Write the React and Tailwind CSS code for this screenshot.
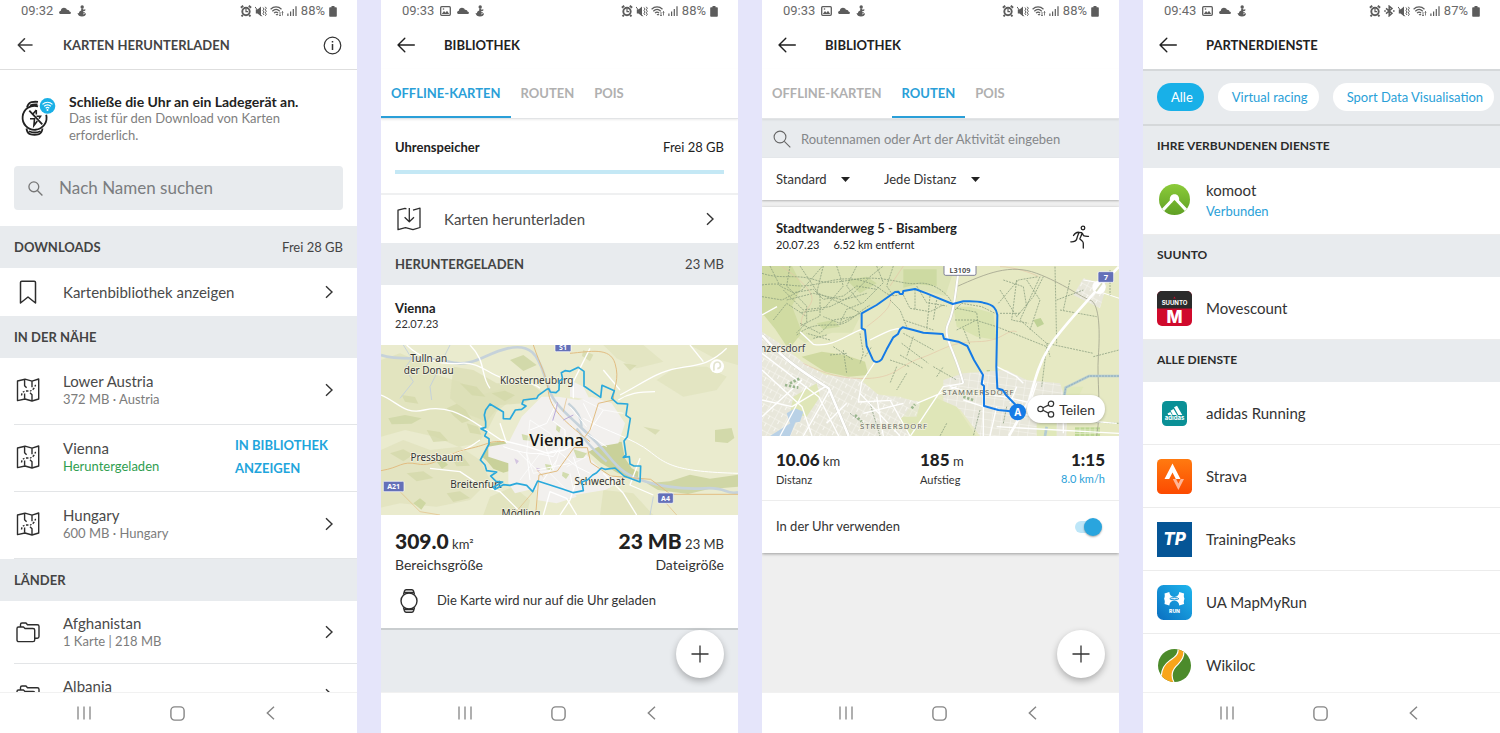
import { useState } from "react";

/* ---------- Icons ---------- */

function BackArrow({ bold }) {
  return bold ? (
    <svg width="16" height="16" viewBox="0 0 16 16" fill="none" stroke="#3c3c3c" strokeWidth="1.6" strokeLinecap="round" strokeLinejoin="round">
      <path d="M15 8H1.5M7.5 1.8 1.3 8l6.2 6.2" />
    </svg>
  ) : (
    <svg width="18" height="16" viewBox="0 0 18 16" fill="none" stroke="#1f1f1f" strokeWidth="1.4" strokeLinecap="round" strokeLinejoin="round">
      <path d="M17.3 8H1M7.8 1.2 1 8l6.8 6.8" />
    </svg>
  );
}

function Chevron() {
  return (
    <svg width="8" height="14" viewBox="0 0 8 14" fill="none" stroke="#333" strokeWidth="1.4" className="shrink-0">
      <path d="m1 1.2 6 5.8-6 5.8" />
    </svg>
  );
}

function MapIcon() {
  return (
    <svg width="24" height="24" viewBox="0 0 24 24" fill="none" stroke="#2d2d2d" strokeWidth="1.4" strokeLinejoin="round">
      <path d="M1.5 3 9 1.2l7 2L22.7 1v20L16 23l-7-2-7.5 1.6z" />
      <path d="M8.6 1.5v6.3l2 2M16 3.3v6M8.6 20.8v-5.2M16 22.6v-5.8l-2-2" />
      <path d="M5.5 17.5c.5-3.2 2-4.5 5.5-4.5s4.5.2 6.5-2.2 1.5-3.5 2.5-4.3" strokeDasharray="2 1.5" />
    </svg>
  );
}

function MapDownloadIcon() {
  return (
    <svg width="24" height="24" viewBox="0 0 24 24" fill="none" stroke="#2d2d2d" strokeWidth="1.3" strokeLinejoin="round">
      <path d="M9.5 2 8 1.3 1 3.2v19.5l7.5-2 7.5 2 7-2.2V1.2l-7 2" />
      <path d="M12.3 1v13.5M7.6 10.2l4.7 4.5 4.7-4.5" />
    </svg>
  );
}

function BookmarkIcon() {
  return (
    <svg width="18" height="24" viewBox="0 0 18 24" fill="none" stroke="#2d2d2d" strokeWidth="1.5" strokeLinejoin="round">
      <path d="M1.5 23V2.5c0-.8.5-1.3 1.3-1.3h12.4c.8 0 1.3.5 1.3 1.3V23L9 17z" />
    </svg>
  );
}

function FoldersIcon() {
  return (
    <svg width="24" height="24" viewBox="0 0 24 24" fill="none" stroke="#2d2d2d" strokeWidth="1.4" strokeLinejoin="round">
      <path d="M1 20V8.5C1 7.5 1.6 7 2.5 7h5L9 8.500h8c1 0 1.7.6 1.7 1.6V20c0 1-.7 1.6-1.7 1.6H2.7C1.7 21.6 1 21 1 20z" />
      <path d="M4.5 7V4.5C4.5 3.6 5 3 6 3h4l1.5 1.8h9.8c1 0 1.7.6 1.7 1.5v10.2c0 1-.6 1.7-1.7 1.7h-2.5" />
    </svg>
  );
}

function WatchIcon() {
  return (
    <svg width="20" height="24" viewBox="0 0 20 24" fill="none" stroke="#2d2d2d" strokeWidth="1.4">
      <circle cx="10" cy="12" r="8" />
      <path d="M4.5 5.5 5.5 2c.3-.8.8-1.2 1.6-1.2h5.8c.8 0 1.3.4 1.6 1.2l1 3.5M4.5 18.5l1 3.5c.3.8.8 1.2 1.6 1.2h5.8c.8 0 1.3-.4 1.6-1.2l1-3.5M5.5 3.5h9M5.5 20.5h9" />
    </svg>
  );
}

function ChargeWatchIcon() {
  return (
    <svg width="36" height="40" viewBox="0 0 36 40" fill="none" stroke="#222" strokeWidth="1.8">
      <path d="M6 9.5c.8-3 1.8-4.5 4.5-5.3 2-.5 4.5-.5 6.5-.3M9 7.6c2-1 4.8-1.4 7.5-1.2" />
      <path d="M17 8.3a12 12 0 1 0 8.2 8.5" />
      <path d="M5.5 30.5c.5 3.5 1.5 5 3.5 5.6 2.6.8 6.5.8 9 0 2-.6 3-2 3.5-5.6M8 33.2c3.5 1.6 8 1.6 11.5 0" />
      <path d="m8.3 12.7 13 13.6" />
      <path d="M15.3 12v4.5M15.3 12l-3.8 4.6M15.5 18.3h4l-1.5 2.4M9 20.8h4.5l-.6 6.7 3.4-4.5" strokeWidth="1.6" />
      <circle cx="26.5" cy="7.9" r="7.8" fill="#1ab0e6" stroke="none" />
      <g stroke="#fff" strokeWidth="1.2">
        <path d="M21.5 6.4c3-2.7 7-2.7 10 0M23.1 8.3c2-1.8 4.8-1.8 6.8 0M24.7 10.2c1.1-1 2.5-1 3.6 0" />
      </g>
      <circle cx="26.5" cy="11.9" r="1" fill="#fff" stroke="none" />
    </svg>
  );
}

function SearchIcon({ size, width, color }) {
  return (
    <svg width={size} height={size} viewBox="0 0 18 18" fill="none" stroke={color} strokeWidth={width} className="shrink-0">
      <circle cx="7" cy="7" r="5.9" />
      <path d="m11.3 11.3 6 6" />
    </svg>
  );
}

function RunnerIcon() {
  return (
    <svg width="20" height="24" viewBox="0 0 20 24" fill="none" stroke="#222" strokeWidth="1.3" strokeLinecap="round" strokeLinejoin="round">
      <circle cx="13" cy="3" r="1.8" />
      <path d="M3.5 10.5C5 8 6.5 7 9 7.3l2.5.3M11.5 7.6c1.2.7 1.5 1.5 2 3 1.5.7 3 .8 5 .7M9 7.5C8 10 7 12 6.8 14c-.8 2-2.5 3-6 2.8M11.8 9c-.5 2-1.6 3.3-2 5 2.2 1.5 3.5 2.5 3.5 4.5v4.5" />
    </svg>
  );
}

function ShareIcon() {
  return (
    <svg width="18" height="18" viewBox="0 0 18 18" fill="none" stroke="#333" strokeWidth="1.2">
      <circle cx="3.5" cy="9" r="2.7" />
      <circle cx="14" cy="3.8" r="2.7" />
      <circle cx="14" cy="14.4" r="2.7" />
      <path d="m6 7.8 5.5-2.7M6 10.2l5.5 2.9" />
    </svg>
  );
}

function Caret() {
  return (
    <svg width="9" height="5" viewBox="0 0 9 5" fill="#222" className="pointer-events-none">
      <path d="M0 0h9L4.5 5z" />
    </svg>
  );
}

/* ---------- Phone chrome ---------- */

function StatusBar({ time, battery, image = true, bluetooth }) {
  return (
    <div className="flex h-[22px] shrink-0 items-center justify-between pl-[21px] pr-5 font-[Roboto,sans-serif] text-[13px] leading-4 text-[#6a6a6a]">
      <div className="flex items-center gap-1.5">
        <span>{time}</span>
        {image && (
          <svg width="11" height="10" viewBox="0 0 11 10" fill="none" stroke="#5c5c5c" strokeWidth="1.3">
            <rect x=".7" y=".7" width="9.6" height="8.6" rx="1" />
            <path d="m1.8 8 2.2-3 1.5 1.7 1.5-2L9.2 8z" fill="#5c5c5c" stroke="none" />
            <circle cx="3.5" cy="3" r=".8" fill="#5c5c5c" stroke="none" />
          </svg>
        )}
        <svg width="12" height="8" viewBox="0 0 12 8" fill="#5c5c5c">
          <path d="M1.7 7C.6 7 .1 6.3.1 5.5c0-1 .8-1.6 1.6-1.5C2 2 3.3.8 5 .8c1.3 0 2.4.7 2.9 1.9 1.500-.2 2.400.6 2.600 1.700.9.1 1.400.6 1.400 1.300S11.400 7 10.500 7z" />
        </svg>
        <svg width="10" height="12" viewBox="0 0 10 12" fill="#5c5c5c">
          <circle cx="5.2" cy="2" r="1.7" />
          <path d="M4.2 3.5h2v1.3l2.2-.6-.2 1.5-2 .5v1l1.5-.3-.1 1.3-1.4.3v.9c.9-.1 1.5-.5 1.8-1.2l1 .4C8.9 10.4 7.5 11.5 5 11.5S1 10.4.5 8l1.4.3c0-1.4.9-2.5 2.3-2.9z" />
        </svg>
      </div>
      <div className="flex items-center gap-[3px]">
        <svg width="12" height="12" viewBox="0 0 12 12" fill="none" stroke="#5c5c5c" strokeWidth="1.9">
          <circle cx="6" cy="6.5" r="3.7" />
          <path d="M.9 2.8 3.2.8M11.1 2.8 8.8.8M2.9 10 1.5 11.4M9.1 10l1.4 1.4" />
          <path d="M6 4v2.7h2" strokeWidth="1.2" />
        </svg>
        {bluetooth && (
          <svg width="11" height="12" viewBox="0 0 11 12" fill="none" stroke="#5c5c5c" strokeWidth="1.5">
            <path d="m2 3.3 6 5-2.8 2.5V1.2L8 3.6 2 8.6" />
            <path d="M.2 6h1.6M9 6h1.6" />
          </svg>
        )}
        <svg width="12" height="11" viewBox="0 0 12 11" fill="#5c5c5c">
          <path d="M.8 3.5h1.7L6 .6v9.6L2.5 7.5H.8z" />
          <path d="m0 .8 6.8 9.5M8 1.5 9 3 8 4.5 9 6 8 7.5 9 9M10.3.8l1 1.5-1 1.5 1 1.5-1 1.5 1 1.5-1 1.5" fill="none" stroke="#5c5c5c" />
        </svg>
        <svg width="14" height="11" viewBox="0 0 14 11" fill="none" stroke="#5c5c5c" strokeWidth="1.2">
          <path d="M.6 3.2c3.2-3 7.7-3 10.9 0M2.3 5.2c2.3-2.1 5.2-2.1 7.5 0M4 7.1c1.3-1.2 2.8-1.2 4.1 0" />
          <path d="M5.5 8 7 9.7 8.5 8z" fill="#5c5c5c" stroke="none" />
          <path d="M10 6v4M12.5 5.5v4M9.3 9l.7 1 .7-1M11.8 6.500l.7-1 .7 1" strokeWidth=".8" />
        </svg>
        <svg width="10" height="10" viewBox="0 0 10 10" fill="#5c5c5c">
          <path d="M.3 7.5h1.2V10H.3zM3 5.5h1.2V10H3zM5.7 3h1.2v7H5.7zM8.4.3h1.2V10H8.4z" />
        </svg>
        <span className="px-px">{battery}</span>
        <svg width="8" height="11" viewBox="0 0 8 11" fill="#5c5c5c">
          <path d="M2.5 0h3v1.2H7c.5 0 .8.3.8.8v8c0 .5-.3.8-.8.8H1c-.5 0-.8-.3-.8-.8V2c0-.5.3-.8.8-.8h1.5z" />
        </svg>
      </div>
    </div>
  );
}

function NavBar() {
  return (
    <nav className="flex h-[41px] shrink-0 items-center justify-center gap-[73px] border-t border-[#f1f1f1] bg-white pr-[3px]">
      <button type="button" aria-label="Recents" className="flex w-5 justify-center">
        <svg width="14" height="14" viewBox="0 0 14 14" stroke="#858585" strokeWidth="1.3">
          <path d="M1 .5v13M7 .5v13M13 .5v13" />
        </svg>
      </button>
      <button type="button" aria-label="Home" className="flex w-5 justify-center">
        <svg width="15" height="15" viewBox="0 0 15 15" fill="none" stroke="#858585" strokeWidth="1.4">
          <rect x=".9" y=".9" width="13.2" height="13.2" rx="3.8" />
        </svg>
      </button>
      <button type="button" aria-label="Back" className="flex w-5 justify-center">
        <svg width="9" height="14" viewBox="0 0 9 14" fill="none" stroke="#858585" strokeWidth="1.4">
          <path d="M8 .8 1.3 7 8 13.2" />
        </svg>
      </button>
    </nav>
  );
}

function Header({ title, bold, children }) {
  return (
    <header className="flex h-[47px] shrink-0 items-center px-[14px] pb-px">
      <button type="button" aria-label="Zurück" className={`flex w-[49px] items-center ${bold ? "pl-[3px]" : "pl-[2px]"}`}>
        <BackArrow bold={bold} />
      </button>
      <h1 className={`flex-1 text-[13px] font-bold leading-4 ${bold ? "text-[#444]" : "text-[#222]"}`}>{title}</h1>
      {children}
    </header>
  );
}

function SectionHeader({ title, right, small }) {
  return (
    <div className={`flex h-[42px] shrink-0 items-center justify-between bg-[#e8ebee] px-[14px] ${small ? "pb-[2px]" : ""}`}>
      <h2 className={`font-bold leading-4 ${small ? "text-[12px] text-[#2b2b2b]" : "text-[13px] text-[#444]"}`}>{title}</h2>
      {right && <span className="text-[13px] leading-4 text-[#444]">{right}</span>}
    </div>
  );
}

function Phone({ children }) {
  return <section className="flex h-screen min-w-0 flex-col overflow-hidden bg-white">{children}</section>;
}

function Fab() {
  return (
    <button
      type="button"
      aria-label="Hinzufügen"
      className="absolute bottom-[14px] right-[14px] flex h-12 w-12 items-center justify-center rounded-full bg-white shadow-[0_3px_7px_rgba(0,0,0,0.28)]"
    >
      <svg width="18" height="18" viewBox="0 0 18 18" stroke="#333" strokeWidth="1.3">
        <path d="M9 .5v17M.5 9h17" />
      </svg>
    </button>
  );
}

const TABS = ["OFFLINE-KARTEN", "ROUTEN", "POIS"];

function Tabs({ initial }) {
  const [active, setActive] = useState(initial);

  return (
    <div className="relative z-10 flex h-[50px] shrink-0 border-b border-[#e2e4e6] bg-white shadow-[0_1px_2px_rgba(0,0,0,0.08)]">
      {TABS.map((tab) => (
        <button
          key={tab}
          type="button"
          onClick={() => setActive(tab)}
          className={`border-b-2 px-[10px] text-[13px] font-bold leading-4 ${
            active === tab ? "border-[#2a9fd8] text-[#2a9fd8]" : "border-transparent text-[#b0b0b0]"
          }`}
        >
          {tab}
        </button>
      ))}
    </div>
  );
}

/* ---------- Maps ---------- */

function Shield({ x, y, w, h, label, size = 21 }) {
  return (
    <g>
      <rect x={x} y={y} width={w} height={h} rx="4" fill="#6470b8" stroke="#fff" strokeWidth="2" />
      <text x={x + w / 2} y={y + h / 2 + size * 0.36} fontSize={size} fontWeight="700" fill="#fff" textAnchor="middle">
        {label}
      </text>
    </g>
  );
}

const VIENNA_BORDER =
  "530,148 536,146 541,156 558,158 567,150 568,122 578,118 574,98 585,92 600,94 625,82 642,94 642,138 692,172 696,136 733,152 725,175 742,190 773,192 768,226 781,235 772,290 762,303 768,345 760,352 778,350 780,372 792,378 812,378 810,426 762,408 735,384 705,388 694,384 680,398 668,405 652,420 636,426 640,452 610,458 580,448 503,423 488,455 470,436 440,430 420,436 400,434 375,448 370,442 398,426 378,424 362,408 380,396 350,392 345,375 331,360 357,312 357,296 344,288 350,275 333,266 347,262 347,246 343,225 347,210 360,192 400,216 400,236 420,237 436,210 455,208 468,198 456,192 460,180 500,175 505,166";

function ViennaMap() {
  return (
    <svg viewBox="33 15 1071 510" className="block w-full" fontFamily='"Noto Sans", sans-serif'>
      <rect x="33" y="15" width="1071" height="510" fill="#eaebce" />
      {/* woods */}
      <g fill="#dcdfb6">
        <path d="M33 60 90 40l60 25 50 40 70 20 60 40 70-20 30 30-50 40-25 50-30 45-60 10-70-30-90-20-72 20z" opacity=".6" />
        <path d="M33 330 100 300l80 30 90-10 60 40 30 60-60 60-100 20-110-10-90 20z" opacity=".55" />
        <path d="M250 80l60 10 70 40 100 0 40 30-60 30-70 5-40 50-50-20-60-50z" opacity=".8" />
        <path d="M860 120l60-40 90 0 60 30-30 40-100 20z" opacity=".5" />
        <path d="M700 15h120l60 50-80 20-60-30zM960 15h144v60l-70-20z" opacity=".5" />
        <path d="M360 470l70-30 50 40-10 45H340zM700 450l90 10 60 65H690z" opacity=".6" />
      </g>
      <g fill="#d3d8a8" opacity=".7">
        <path d="M230 205l30-14 26 18 20 30-30 10-24-20zM290 250l34 10 10 24-34-6zM170 270l40 6 24 26-44 4zM95 165l40 6 10 20-40-6zM270 130l50 10 26 30-40-4zM365 160l40-8 30 14-30 18z" />
        <path d="M60 340l40-12 30 16-30 20zM240 345l40 6 20 26-40 2zM110 400l50-6 30 20-50 10zM230 460l40-6 30 20-50 12zM640 30l30 14-10 20-24-16zM820 260l50 10-14 14zM760 70l40 6-20 16z" />
      </g>
      <path d="M358 310l50-8 12 30 0 60-20 6-30-12-20-24-12-10z" fill="#c9d19a" />
      <path d="M655 335l40-22 60-8 10 50 20 30 20 10-2 26-60-22-50-30z" fill="#c9d19a" />
      <path d="M830 430l70-6 60-20 60 12 84-12v36l-90 8-60 14-90-12z" fill="#cfd6a5" />
      <path d="M1035 270l50-6 8 30-20 15-38-4zM55 235l50-10 50 10-30 16-60 2zM420 60l40-15 40 30-40 18z" fill="#d2d9aa" />
      <path d="M130 490l20-15 18 14-14 20zM200 365l20-5 14 14-18 12z" fill="#ced7a2" />
      {/* city */}
      <path d="M455 230l60-60 50 0 60 10 40-10 60 20 40 60-20 60-60 10-40 20 60 60 60 20-60 30-60 10-60 10-60-20-50 0-40 10-20-30 0-60-60-20 0-30 60-10z" fill="#f2f0ee" />
      <path d="M500 400l80 20 40 50-60 20-60-10zM410 305l50 10 0 60-38 20zM600 120l40 20 20 40-60-10z" fill="#f2f0ee" />
      <g fill="#d2dcae">
        <path d="M455 282l24 6 0 14-20-2zM560 255l12 8-4 16-10-10zM610 328l40 12-10 14-20 0zM525 372l22 4 0 16-18-4zM578 395l20 8-10 14-12-10z" />
      </g>
      <path d="M433 355l14 8-8 10zM498 383l14 3-6 9z" fill="#d3c4e0" />
      {/* Danube */}
      <g fill="none" stroke="#c6d2da" strokeLinejoin="round">
        <path d="M33 45c60 20 120 0 200 20s110-25 180-40 90 20 110 80 20 70 60 110 90 80 130 130 60 60 100 75 120 30 190 25 60 20 101 12" strokeWidth="8" />
        <path d="M595 190c25 20 40 40 40 70M620 265c40 60 70 80 90 100" strokeWidth="7" />
        <path d="M100 15l25 40-20 30 25 40-40 50M210 80l-30 60 5 40M240 15l-25 50M850 470l-10 55" strokeWidth="3" />
      </g>
      {/* roads */}
      <g fill="none" stroke="#fff" strokeWidth="4" strokeLinejoin="round">
        <path d="M33 165c50 20 70 60 130 45s110 10 170 50l60 40 80 20 60 20 50-10 40-25" />
        <path d="M110 15c40 40 100 60 160 55s80 30 130 45 90 10 110 30M300 15c50 50 30 90 60 130" />
        <path d="M750 165c60-30 110-70 170-80s100-10 150-60M745 180c30-20 60-25 110-25M700 90l50 60M960 15l40 50M660 25l-50 100 0 50" />
        <path d="M640 235c70 40 150 60 200 100s80 60 264 65" strokeWidth="3" />
        <path d="M120 350c70 0 130 10 210-50M180 385l90 10 60 40 60 20 60 60M390 250l20 60M520 525l20-70 50 20 30 50M620 420l-20 60-30 45" />
        <path d="M700 400l60 60 40 65M850 465l-70-30 30-80" />
        <path d="M400 320c60 20 100 30 160 10M440 330l60 60 100-20M470 340l10 80M500 340l50 10 30-40 50-20M520 300l30 90M560 330l60 50 40 20M545 240l40 30 0 60M600 200l50 60M560 190l-30 60-50 20M610 350l20 60M560 360l-40 60M640 190l30 60M700 210l-40 60M650 280l60 40" strokeWidth="3" />
        <path d="M480 240l60 40 30 50-20 60-60 10-20-60zM590 380l60-30M600 400l10 50M540 400l60 60M450 420l60-80M640 180l60 30 60 10" strokeWidth="2" />
      </g>
      {/* motorways */}
      <g fill="none" stroke="#e2bd82" strokeWidth="3" strokeLinejoin="round">
        <path d="M33 392c60-10 60-30 110-20s80-30 150-45 60-25 110-22" />
        <path d="M490 15c20 60 40 90 45 140s50 90 100 130l25 20M600 40c60-5 120-20 135 30s-5 70-5 110l-45 10-25 80-15 20" />
        <path d="M497 525l10-120 55-12 50-70 40 0 10 45 60 40 120 10 60 45 245 0" />
        <path d="M90 455l60 60 60 10M880 480l40 45M500 390l20 20M590 175l-10 40M430 525l60-70" strokeWidth="2" />
      </g>
      <path d="M548 242l12-40 2-15M580 240l30-15" fill="none" stroke="#b9a9d8" strokeWidth="3" />
      <Shield x={555} y={8} w={48} h={27} label="S1" />
      <Shield x={40} y={424} w={62} h={31} label="A21" />
      <Shield x={863} y={459} w={47} h={31} label="A4" />
      {/* labels */}
      <g fill="#333" stroke="#f3f3e2" strokeWidth="4" paintOrder="stroke" fontSize="30" textAnchor="middle">
        <text x="176" y="65">Tulln an</text>
        <text x="176" y="102">der Donau</text>
        <text x="500" y="132">Klosterneuburg</text>
        <text x="200" y="362">Pressbaum</text>
        <text x="318" y="443">Breitenfurt</text>
        <text x="689" y="434">Schwechat</text>
        <text x="453" y="531">Mödling</text>
        <text x="560" y="319" fontSize="50" fill="#111" fontWeight="500">Vienna</text>
      </g>
      <polygon points={VIENNA_BORDER} fill="none" stroke="#2aa9dc" strokeWidth="5" strokeLinejoin="round" />
      <circle cx="1041" cy="79" r="21" fill="#fff" />
      <path d="M1032 92c-1-16-1-26 10-26s14 18 0 20" fill="none" stroke="#e3e4cf" strokeWidth="5" />
    </svg>
  );
}

const ROUTE =
  "M803 456 745 450 702 438V378L695 372 699 345 672 300 652 258 625 245 582 236 578 222 520 218 490 210 458 202 450 208 444 222 430 232 410 268 395 298Q386 308 376 305 371 304 368 298L350 258 345 210 335 205V160L380 135 435 96 445 95 450 102H458L460 93 495 87 530 100 608 132 640 124Q680 122 700 128 725 133 732 142 740 150 742 165L739 320 742 385 758 390 768 405 800 438Z";

function RouteMap() {
  return (
    <svg viewBox="36 18 1071 510" className="block w-full" fontFamily='"Noto Sans", sans-serif'>
      <defs>
        <pattern id="blocks" width="32" height="24" patternUnits="userSpaceOnUse" patternTransform="rotate(28)">
          <rect width="32" height="24" fill="#e8e7db" />
          <path d="M0 0h32M0 0v24M16 0v12" stroke="#f8f7f2" strokeWidth="3" />
        </pattern>
        <pattern id="grid" width="28" height="22" patternUnits="userSpaceOnUse" patternTransform="rotate(8)">
          <rect width="28" height="22" fill="#e8e7db" />
          <path d="M0 0h28M0 0v22" stroke="#f8f7f2" strokeWidth="3" />
        </pattern>
      </defs>
      <rect x="36" y="18" width="1071" height="510" fill="#e6e9c3" />
      {/* hillside woods */}
      <path d="M36 18h540l30 30-20 60-80-20-70 10-100 60-30 60-60 0-80 30-30-20-50-60-50 0z" fill="#dce3b6" />
      <path d="M36 18h90l30 60-30 60 30 80-40 50-40-60-40-50z" fill="#d0dba2" />
      <path d="M155 290l60-15 70 10 60 20 10 40-60 5-70-15z" fill="#cfd9a0" />
      <path d="M460 28h100v50l-60-5-40 10zM290 60l60-10 30 20-50 30zM200 190l50-10 20 20-50 8z" fill="#cddaa2" />
      <path d="M610 140l50 0 70 20 10 80-60-10-60-30z" fill="#d9e3b0" />
      <path d="M850 180l22-6 10 18-20 10zM710 330h10v35h-8z" fill="#bfd296" />
      {/* built-up areas */}
      <path d="M36 215l60 40 60 50 70 40 100 10 60 50 130 20 0 103H36z" fill="url(#blocks)" />
      <path d="M580 360l60-20 130-10 60 30 100 10 20 60 0 98H690l-60-80-50-20z" fill="url(#grid)" />
      <path d="M1000 55l70 20-20 70-80-40z" fill="url(#blocks)" />
      <path d="M130 410l70-40 10 40-40 60-50-10zM490 430l60-20 70 30 60 90H480l-30-50z" fill="#dfe6b8" />
      <path d="M350 400l100 10 60 20-10 40-100 0z" fill="url(#blocks)" opacity=".7" />
      <path d="M110 460l25-15 25 10-10 30-30 5z" fill="#b9d1e6" />
      <path d="M60 528l80-50-20 50z" fill="#b9d1e6" />
      <path d="M940 380h60l-20 40-40 20zM860 490l60 0 0 38h-60z" fill="#e0e8ba" />
      <path d="M975 502h75v26h-75z" fill="#bcd692" />
      <path d="M975 510h75M975 520h75M990 502v26M1005 502v26M1020 502v26M1035 502v26" stroke="#eef2d8" strokeWidth="2" />
      {/* contour tints */}
      <g fill="none" stroke="#e6c6a8" strokeWidth="2">
        <path d="M95 18c40 30 80 60 90 90s-40 50-30 90M350 200c40-30 80-60 70-90M160 310c60 30 120 50 200 45s90-40 150-60 90-50 170-50 90-40 120-30M750 20c40 0 100 20 115 30M460 18l-40 60" />
      </g>
      {/* footpaths */}
      <g fill="none" stroke="#82987a" strokeWidth="2.5" strokeDasharray="6 3" strokeLinejoin="round" opacity=".85">
        <path d="M36 40c60 20 100 0 160 20s110-10 180-5 90 20 130 15 90 30 100 60M36 75c60-10 100 10 150 0s100-30 160-10 60 50 100 40" />
        <path d="M60 18l30 60 40 20 60-10 30 30 60-10 40-30 60 10M120 18l-10 60 60 60 0 50-30 30M150 18l60 90 0 60-60 30M220 18l-20 80 70 30 60 30M260 18l20 60-60 70-70 10" />
        <path d="M100 90l60 60 80-10 60-30 60-60 40-32M110 120l80-20 90 20 70-20M36 110l60 10 60-30 60-70M320 18l-30 60 40 50M380 18l20 50-60 60-50 20-20 40M430 18l-20 60 20 30M500 78l30 50 60 10" />
        <path d="M140 225c40-30 60-30 110-30s60-30 110-60M150 190l60 30 40-40 60-10M70 180l40-50 60 40M330 160l-60 30-50-20" />
        <path d="M460 105l20 40 60 10 40-20M420 120l30 30 20 50M540 108l-10 100M560 120l-10 60M460 180l90 30M495 88l0 60" />
        <path d="M615 150l20-20 60 10 40 20M615 180l60 0 65 20M620 210l60-30M620 145l60 12 10 80M640 205l20 50" />
        <path d="M745 130l60-70 60-10M750 90l50 80 50-60 30-60M800 60l-15 120 50 10M760 60l60 20 10 60M750 160l60 0M830 60l40 60-30 90" />
        <path d="M870 50l-60 130 80 70 10 40M915 20l5 230M920 120l80-30M930 150l110 20M890 250l140 30M740 200l150 60M890 260l-15 120M1030 290l77-20M960 60l-20 90M1080 30l0 80" />
        <path d="M230 225l-40 10M240 240l-70-20M250 260l60 40M280 270l10 70M240 285l50-5M330 220l10 60-10 30M345 290l20-30M460 220l90 50M455 250l80 60M450 285l70 40M440 320l-20 50M470 340l-30 50M490 230l-20 60M550 320l70 40M560 350l20-30M420 300l60 20" />
        <path d="M360 430l30 98M300 460l40 30M690 450l-20 78M770 440l-10 50M590 490l-20 38M920 480l187 10" />
      </g>
      <path d="M620 80c90-40 160-70 240-40s130 70 160 80 30 100 25 170 10 150-5 238" fill="none" stroke="#a3a58f" strokeWidth="2.5" />
      <path d="M1107 348l-90 0-70 35-10 60M890 500l-5 28" fill="none" stroke="#b3cbd2" strokeWidth="8" />
      <path d="M1107 348l-90 0-70 35-10 60" fill="none" stroke="#7f9fae" strokeWidth="2" strokeDasharray="6 3" />
      {/* roads */}
      <g fill="none" stroke="#cfcfc4" strokeLinejoin="round">
        <path d="M625 40c-10 60-10 110-30 150s20 80 45 180" strokeWidth="8" />
        <path d="M36 225c60 70 120 110 200 160l60 143" strokeWidth="10" />
      </g>
      <g fill="none" stroke="#fff" strokeLinejoin="round">
        <path d="M625 40c-10 60-10 110-30 150s20 80 45 180" strokeWidth="6" />
        <path d="M36 225c60 70 120 110 200 160l60 143" strokeWidth="8" />
        <path d="M1107 20l-60 62c-60 70-120 130-150 180s-40 90-60 160l-60 106" strokeWidth="8" />
        <path d="M1048 95l60 20M1000 60l60 10" strokeWidth="3" />
        <path d="M360 240c60-30 70-35 100-35M150 215l40 38c60 10 100-30 145-45M36 165l45-25M375 306l-40 60-10 60 100-5M500 430l120-50M640 370l-60 10-100 150M740 320l60 30 20 20" strokeWidth="4" />
        <path d="M36 420l90 20 100-60M36 470l120-110M90 528l80-150M160 528l80-140M36 330l120 110 30 88M36 280l170 130 60 118M330 400l120 128M290 430l-60 60M380 410l20 118M420 420l60 108M340 460l120-30" strokeWidth="4" />
        <path d="M600 380l70 20 90 10 90 20M640 420l60 20 160 30 240 20M700 360l0 168M740 440l-20 88M860 370l-20 60 60 20M940 440l0 80M740 500l367 20M800 380l-20 50" strokeWidth="4" />
      </g>
      <path d="M120 370l30-15M105 375l40 8M315 465l20 20M485 445l10-12M640 410l30 10" stroke="#9ab68e" strokeWidth="8" strokeDasharray="7 5" />
      {/* labels */}
      <g fill="#444" stroke="#f1f1e0" strokeWidth="4" paintOrder="stroke">
        <text x="30" y="275" fontSize="30">nzersdorf</text>
        <text x="685" y="406" fontSize="23" textAnchor="middle" fill="#66675f" letterSpacing="3">STAMMERSDORF</text>
        <text x="432" y="506" fontSize="23" textAnchor="middle" fill="#66675f" letterSpacing="3">STREBERSDORF</text>
      </g>
      <rect x="582" y="8" width="96" height="38" rx="5" fill="#fff" stroke="#6a6a8c" strokeWidth="2.5" />
      <text x="630" y="38" fontSize="22" fontWeight="600" fill="#444" textAnchor="middle">L3109</text>
      <circle cx="1047" cy="82" r="20" fill="#fff" />
      <path d="M1038 94l18-24" stroke="#d9dcc0" strokeWidth="5" />
      <Shield x={1044} y={35} w={47} h={32} label="7" size={23} />
      {/* route */}
      <path d={ROUTE} fill="none" stroke="#157be6" strokeWidth="6" strokeLinejoin="round" />
      <circle cx="803" cy="456" r="25" fill="#157be6" />
      <text x="803" y="467" fontSize="30" fontWeight="700" fill="#fff" textAnchor="middle">A</text>
    </svg>
  );
}

/* ---------- Screen 1: download maps ---------- */

function MapRow({ icon, title, sub, tall, action, subClass = "text-[#7c7c7c]" }) {
  return (
    <li className={`flex shrink-0 items-center pl-[14px] ${tall ? "h-[67px]" : "h-[63px]"}`}>
      <div className={`flex h-full flex-1 items-center border-b border-[#e3e5e7] pr-[24px] ${tall ? "pb-[2px]" : ""}`}>
        <span className="flex w-7 shrink-0 justify-center">{icon}</span>
        <div className="ml-[21px] flex-1">
          <p className="text-[15px] leading-[18px] text-[#4a4a4a]">{title}</p>
          <p className={`text-[13px] leading-[18px] ${subClass}`}>{sub}</p>
        </div>
        {action || <Chevron />}
      </div>
    </li>
  );
}

function DownloadScreen() {
  return (
    <Phone>
      <StatusBar time="09:32" battery="88%" image={false} />
      <Header title="KARTEN HERUNTERLADEN" bold>
        <button type="button" aria-label="Info" className="mr-px">
          <svg width="19" height="19" viewBox="0 0 19 19" fill="none" stroke="#333" strokeWidth="1.2">
            <circle cx="9.5" cy="9.5" r="8.3" />
            <path d="M9.5 8v6M9.5 5v1.5" strokeWidth="1.5" />
          </svg>
        </button>
      </Header>
      <main className="flex min-h-0 flex-1 flex-col overflow-hidden border-t border-[#dedede]">
        <div className="flex h-24 shrink-0 items-center pl-[21px]">
          <ChargeWatchIcon />
          <div className="ml-3 text-[13px] leading-[17px]">
            <p className="text-[14px] font-bold text-[#222]">Schließe die Uhr an ein Ladegerät an.</p>
            <p className="w-[230px] text-[#808080]">Das ist für den Download von Karten erforderlich.</p>
          </div>
        </div>
        <label className="mx-[14px] mb-[16px] flex h-11 shrink-0 items-center gap-[16px] rounded bg-[#e8ebee] pl-[14px]">
          <SearchIcon size={15} width={1.6} color="#777" />
          <input
            type="text"
            aria-label="Nach Namen suchen"
            placeholder="Nach Namen suchen"
            className="min-w-0 flex-1 bg-transparent text-[17px] leading-5 outline-none placeholder:text-[#7b7d80]"
          />
        </label>
        <SectionHeader title="DOWNLOADS" right="Frei 28 GB" />
        <button type="button" className="flex h-12 shrink-0 items-center pl-[14px] pr-[24px] text-left">
          <span className="flex w-7 justify-center">
            <BookmarkIcon />
          </span>
          <span className="ml-[21px] flex-1 text-[15px] leading-[18px] text-[#4a4a4a]">Kartenbibliothek anzeigen</span>
          <Chevron />
        </button>
        <SectionHeader title="IN DER NÄHE" />
        <ul className="shrink-0">
          <MapRow tall icon={<MapIcon />} title="Lower Austria" sub="372 MB · Austria" />
          <MapRow
            tall
            icon={<MapIcon />}
            title="Vienna"
            sub="Heruntergeladen"
            subClass="text-[#2f9e4f]"
            action={
              <button type="button" className="w-[98px] text-left text-[13px] font-bold leading-[23px] text-[#1fa5dc]">
                IN BIBLIOTHEK ANZEIGEN
              </button>
            }
          />
          <MapRow tall icon={<MapIcon />} title="Hungary" sub="600 MB · Hungary" />
        </ul>
        <SectionHeader title="LÄNDER" />
        <ul className="shrink-0">
          <MapRow icon={<FoldersIcon />} title="Afghanistan" sub="1 Karte | 218 MB" />
          <MapRow icon={<FoldersIcon />} title="Albania" sub="1 Karte | 75 MB" />
        </ul>
      </main>
      <NavBar />
    </Phone>
  );
}

/* ---------- Screen 2: offline maps ---------- */

function OfflineScreen() {
  return (
    <Phone>
      <StatusBar time="09:33" battery="88%" />
      <Header title="BIBLIOTHEK" />
      <Tabs initial="OFFLINE-KARTEN" />
      <main className="relative min-h-0 flex-1 overflow-hidden bg-[#e8ebee]">
        <div className="border-b-2 border-[#c9cdcf] bg-white">
          <div className="border-b-2 border-[#eff0f1] px-[14px] pb-[19px] pt-[19px]">
            <div className="flex items-center justify-between text-[13px] leading-[18px] text-[#222]">
              <span className="font-bold">Uhrenspeicher</span>
              <span>Frei 28 GB</span>
            </div>
            <div className="mt-[14px] h-1 bg-[#c4e8f5]" />
          </div>
          <button type="button" className="flex h-12 w-full items-center pl-[14px] pr-[24px] text-left">
            <span className="flex w-7 justify-center">
              <MapDownloadIcon />
            </span>
            <span className="ml-[21px] flex-1 text-[15px] leading-[18px] text-[#4a4a4a]">Karten herunterladen</span>
            <Chevron />
          </button>
          <SectionHeader title="HERUNTERGELADEN" right="23 MB" />
          <div className="px-[14px] pb-[13px] pt-[15px] text-[#222]">
            <p className="text-[13px] font-bold leading-4">Vienna</p>
            <p className="text-[11px] leading-4 text-[#333]">22.07.23</p>
          </div>
          <ViennaMap />
          <div className="flex justify-between px-[14px] pt-[14px] text-[13px] text-[#333]">
            <div>
              <p className="leading-6">
                <b className="text-[21px] font-black text-[#222]">309.0</b> km²
              </p>
              <p className="text-[14px] leading-[18px]">Bereichsgröße</p>
            </div>
            <div className="text-right">
              <p className="leading-6">
                <b className="text-[21px] font-black text-[#222]">23 MB</b> 23 MB
              </p>
              <p className="text-[14px] leading-[18px]">Dateigröße</p>
            </div>
          </div>
          <div className="flex h-[54px] items-center pl-[14px] text-[13px] text-[#333]">
            <span className="mr-[14px] flex w-7 justify-center">
              <WatchIcon />
            </span>
            Die Karte wird nur auf die Uhr geladen
          </div>
        </div>
        <Fab />
      </main>
      <NavBar />
    </Phone>
  );
}

/* ---------- Screen 3: routes ---------- */

function Filter({ label, options }) {
  return (
    <label className="flex items-center gap-[14px]">
      <select aria-label={label} className="appearance-none bg-transparent text-[13px] leading-[18px] text-[#333] outline-none">
        {options.map((option) => (
          <option key={option}>{option}</option>
        ))}
      </select>
      <Caret />
    </label>
  );
}

function RoutesScreen() {
  const [onWatch, setOnWatch] = useState(true);

  return (
    <Phone>
      <StatusBar time="09:33" battery="88%" />
      <Header title="BIBLIOTHEK" />
      <Tabs initial="ROUTEN" />
      <main className="relative min-h-0 flex-1 overflow-hidden bg-[#efefef]">
        <label className="flex h-[39px] items-center gap-[10px] bg-[#e8ebee] pl-[11px]">
          <SearchIcon size={18} width={1.1} color="#666" />
          <input
            type="text"
            aria-label="Routen suchen"
            placeholder="Routennamen oder Art der Aktivität eingeben"
            className="min-w-0 flex-1 bg-transparent text-[13px] leading-5 outline-none placeholder:text-[#85878a]"
          />
        </label>
        <div className="flex h-[42px] items-center gap-[34px] bg-white pl-[14px] shadow-[0_1px_2px_rgba(0,0,0,0.25)]">
          <Filter label="Sortierung" options={["Standard"]} />
          <Filter label="Distanz" options={["Jede Distanz"]} />
        </div>
        <article className="mt-[7px] bg-white shadow-[0_1px_3px_rgba(0,0,0,0.35)]">
          <div className="flex items-center justify-between py-[13px] pl-[14px] pr-[29px]">
            <div className="text-[#222]">
              <h2 className="text-[13px] font-bold leading-[17px]">Stadtwanderweg 5 - Bisamberg</h2>
              <p className="flex gap-[14px] text-[11px] leading-4">
                <span>20.07.23</span>
                <span>6.52 km entfernt</span>
              </p>
            </div>
            <RunnerIcon />
          </div>
          <div className="relative">
            <RouteMap />
            <button
              type="button"
              className="absolute bottom-[13px] right-[14px] flex h-7 items-center gap-1 rounded-full bg-white px-[10px] text-[14px] text-[#333] shadow-[0_1px_3px_rgba(0,0,0,0.25)]"
            >
              <ShareIcon />
              Teilen
            </button>
          </div>
          <dl className="grid h-[65px] grid-cols-[144px_1fr_auto] content-center border-b border-[#ededed] px-[14px] text-[#333]">
            <div className="flex flex-col">
              <dt className="order-2 text-[11px] leading-4">Distanz</dt>
              <dd className="text-[13px] leading-[22px]">
                <b className="text-[17px] font-black text-[#222]">10.06</b> km
              </dd>
            </div>
            <div className="flex flex-col">
              <dt className="order-2 text-[11px] leading-4">Aufstieg</dt>
              <dd className="text-[13px] leading-[22px]">
                <b className="text-[17px] font-black text-[#222]">185</b> m
              </dd>
            </div>
            <div className="flex flex-col text-right">
              <dt className="order-2 text-[11px] leading-4 text-[#2a9fd8]">8.0 km/h</dt>
              <dd className="text-[17px] font-black leading-[22px] text-[#222]">1:15</dd>
            </div>
          </dl>
          <label className="flex h-[52px] items-center justify-between pl-[14px] pr-[18px] text-[13px] text-[#333]">
            In der Uhr verwenden
            <input
              type="checkbox"
              role="switch"
              checked={onWatch}
              onChange={(e) => setOnWatch(e.target.checked)}
              className="relative h-3 w-[26px] appearance-none rounded-full bg-[#d5d5d5] before:absolute before:-top-[3px] before:left-0 before:h-[18px] before:w-[18px] before:rounded-full before:bg-[#999] before:shadow-[0_1px_2px_rgba(0,0,0,0.35)] checked:bg-[#bde6f8] checked:before:left-[9px] checked:before:bg-[#29a5de]"
            />
          </label>
        </article>
        <Fab />
      </main>
      <NavBar />
    </Phone>
  );
}

/* ---------- Screen 4: partner services ---------- */

function KomootLogo() {
  return (
    <svg width="31" height="31" viewBox="0 0 30 30">
      <defs>
        <linearGradient id="komoot" x2="0" y2="1">
          <stop stopColor="#8ccb3a" />
          <stop offset="1" stopColor="#5fa024" />
        </linearGradient>
        <clipPath id="komoot-disc">
          <circle cx="15" cy="15" r="15" />
        </clipPath>
      </defs>
      <g clipPath="url(#komoot-disc)">
        <rect width="30" height="30" fill="url(#komoot)" />
        <path d="M3 26 12 16.500M27 26 18 16.500" fill="none" stroke="#fff" strokeWidth="3" />
        <path d="M10.800 17.500C9.500 12.500 12 10 15 10s5.500 2.500 4.200 7.500L17.500 18 15 15.500 12.500 18z" fill="#fff" />
      </g>
    </svg>
  );
}

function MovescountLogo() {
  return (
    <svg width="35" height="35" viewBox="0 0 35 35">
      <rect width="35" height="35" rx="5" fill="#d00a2c" />
      <path d="M0 17.5V5a5 5 0 0 1 5-5h25a5 5 0 0 1 5 5v12.5z" fill="#2b2b2b" />
      <path d="m17.5 5.5 1.2 2h-2.4z" fill="#d00a2c" />
      <text x="17.5" y="13.8" fontSize="6" fontWeight="700" fill="#fff" textAnchor="middle" fontFamily="Inter, sans-serif">SUUNTO</text>
      <text x="17.5" y="31.8" fontSize="17" fontWeight="800" fill="#fff" textAnchor="middle" fontFamily="Inter, sans-serif">M</text>
    </svg>
  );
}

function AdidasLogo() {
  return (
    <svg width="25" height="25" viewBox="0 0 25 25">
      <rect width="25" height="25" rx="4.5" fill="#0a9096" />
      <path d="m12 6.3 3-1.6 5.3 9.3h-4zM8.500 9.700l3-1.700 3.500 6h-4zM5.500 12.500l2.800-1.500 1.800 3H6.200z" fill="#fff" />
      <text x="12.5" y="18.5" fontSize="6" fontWeight="700" fill="#fff" textAnchor="middle" fontFamily="Inter, sans-serif">adidas</text>
    </svg>
  );
}

function StravaLogo() {
  return (
    <svg width="35" height="35" viewBox="0 0 35 35">
      <defs>
        <linearGradient id="strava" x2="0" y2="1">
          <stop stopColor="#ff7a10" />
          <stop offset="1" stopColor="#fc4a00" />
        </linearGradient>
      </defs>
      <rect width="35" height="35" rx="4.5" fill="url(#strava)" />
      <path d="M15.5 4.5 23.5 20h-4.7l-3.3-6.5-3.3 6.5H7.5z" fill="#fff" />
      <path d="M15.8 20h3.3l2.3 4.5 2.3-4.5H27l-5.6 11z" fill="#ffb596" />
    </svg>
  );
}

function TrainingPeaksLogo() {
  return (
    <svg width="35" height="35" viewBox="0 0 35 35">
      <rect width="35" height="35" fill="#055596" />
      <text x="17.5" y="23.3" fontSize="17" fontWeight="800" fontStyle="italic" fill="#fff" textAnchor="middle" fontFamily="Inter, sans-serif">TP</text>
    </svg>
  );
}

function MapMyRunLogo() {
  return (
    <svg width="35" height="35" viewBox="0 0 35 35">
      <defs>
        <linearGradient id="mapmyrun" x1="1" y1="0" x2="0" y2="1">
          <stop stopColor="#1fb6ee" />
          <stop offset="1" stopColor="#0a6fc0" />
        </linearGradient>
      </defs>
      <rect width="35" height="35" rx="6.5" fill="url(#mapmyrun)" />
      <path d="M7.5 8.5 12.3 7c.3 3.2 1.9 4.6 5 5 3.1-.4 4.7-1.8 5-5l4.800 1.500c-.5 2.200-.3 3.500.4 5.200-.7 1.700-.9 3-.4 5.200l-4.800 1.500c-.3-3.200-1.900-4.600-5-5-3.100.4-4.700 1.800-5 5l-4.800-1.500c.5-2.200.3-3.500-.4-5.200.7-1.700.9-3 .4-5.200z" fill="#fff" />
      <ellipse cx="17.3" cy="13.7" rx="4.5" ry="1.1" fill="none" stroke="#1893d8" strokeWidth="1" />
      <text x="17.5" y="27.8" fontSize="5" fontWeight="800" fill="#fff" textAnchor="middle" fontFamily="Inter, sans-serif">RUN</text>
    </svg>
  );
}

function WikilocLogo() {
  return (
    <svg width="33" height="33" viewBox="0 0 34 34">
      <defs>
        <clipPath id="wikiloc">
          <circle cx="17" cy="17" r="17" />
        </clipPath>
      </defs>
      <g clipPath="url(#wikiloc)">
        <rect width="34" height="34" fill="#4c8b2b" />
        <path
          d="M20.5-2C22 6 17 8.5 12 12S4 20 3.5 27c0 4 1 7 3 9h11C13 29 14 23 18.5 18S28 10 26.5-2z"
          fill="#f8a51b"
          stroke="#fff"
          strokeWidth="1.2"
        />
      </g>
    </svg>
  );
}

const SERVICES = [
  { name: "adidas Running", logo: <AdidasLogo /> },
  { name: "Strava", logo: <StravaLogo /> },
  { name: "TrainingPeaks", logo: <TrainingPeaksLogo /> },
  { name: "UA MapMyRun", logo: <MapMyRunLogo /> },
  { name: "Wikiloc", logo: <WikilocLogo /> },
];

function ServiceRow({ name, logo, status }) {
  return (
    <li className={`flex items-center border-b border-[#ececec] pl-[14px] ${status ? "h-[67px] pb-1" : "h-[63px]"}`}>
      <span className="flex w-[35px] shrink-0 justify-center">{logo}</span>
      <div className={`ml-[14px] ${status ? "pt-1" : ""}`}>
        <p className="text-[15px] leading-[20px] text-[#333]">{name}</p>
        {status && <p className="text-[13px] leading-[22px] text-[#2a9fd8]">{status}</p>}
      </div>
    </li>
  );
}

function PartnerScreen() {
  const chips = ["Alle", "Virtual racing", "Sport Data Visualisation"];
  const [selected, setSelected] = useState("Alle");

  return (
    <Phone>
      <StatusBar time="09:43" battery="87%" bluetooth />
      <Header title="PARTNERDIENSTE" />
      <main className="min-h-0 flex-1 overflow-hidden">
        <div className="flex h-[57px] items-center gap-[14px] overflow-hidden border-b-2 border-t-2 border-[#d5d8da] bg-[#e8ebee] pb-px pl-[14px]">
          {chips.map((chip) => (
            <button
              key={chip}
              type="button"
              onClick={() => setSelected(chip)}
              className={`h-7 shrink-0 rounded-full pl-[14px] pr-[11px] text-[13px] leading-4 ${
                selected === chip ? "bg-[#18b0e8] text-white" : "bg-white text-[#2a9fd8]"
              }`}
            >
              {chip}
            </button>
          ))}
        </div>
        <SectionHeader small title="IHRE VERBUNDENEN DIENSTE" />
        <ul>
          <ServiceRow name="komoot" logo={<KomootLogo />} status="Verbunden" />
        </ul>
        <SectionHeader small title="SUUNTO" />
        <ul>
          <ServiceRow name="Movescount" logo={<MovescountLogo />} />
        </ul>
        <SectionHeader small title="ALLE DIENSTE" />
        <ul>
          {SERVICES.map((service) => (
            <ServiceRow key={service.name} {...service} />
          ))}
        </ul>
      </main>
      <NavBar />
    </Phone>
  );
}

function App() {
  return (
    <div className="grid grid-cols-4 gap-6 bg-[#e5e5fa] font-[Lato,sans-serif]">
      <DownloadScreen />
      <OfflineScreen />
      <RoutesScreen />
      <PartnerScreen />
    </div>
  );
}

export default App;
